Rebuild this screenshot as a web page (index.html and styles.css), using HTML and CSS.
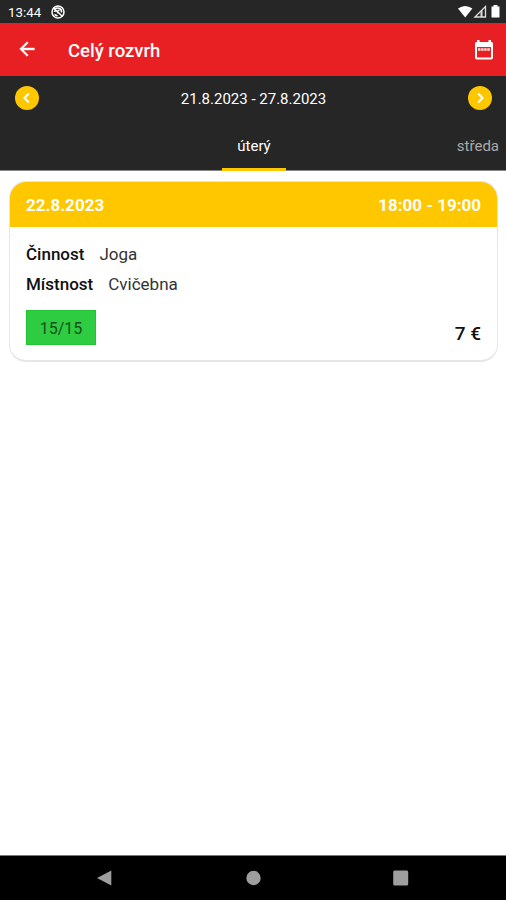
FILE: index.html
```html
<!DOCTYPE html>
<html lang="cs">
<head>
    <meta charset="UTF-8">
    <meta name="viewport" content="width=device-width, initial-scale=1.0">
    <title>Celý rozvrh</title>
    <link rel="stylesheet" href="styles.css">
</head>
<body>
    <div class="status-bar">
        <div class="status-left">
            <span>13:44</span>
            <svg width="14" height="14" viewBox="0 0 14 14" fill="none" stroke="#fff">
                <circle cx="7" cy="7" r="6" stroke-width="1.5"/>
                <path d="M2.500 3l9 8.500M4 4c3-2 7-.5 6.500 3.500M3 6.500c2-1.500 4 0 4 2M3.500 9.500l3 1.500M6.500 5.500h2" stroke-width="1.500"/>
            </svg>
        </div>
        <svg width="44" height="14" viewBox="0 0 44 14">
            <path d="M0 3.500Q7.200-1.500 14.400 3.500L7.200 12.500Z" fill="#fff"/>
            <path d="M17 12L27.500 1.500V12Z" fill="none" stroke="#ddd" stroke-width="1.300"/>
            <path d="M22.500 12V7L24.500 5V12Z" fill="#ddd"/>
            <path d="M35.500 0h4v1.500h2V12.500h-8V1.500h2Z" fill="#fff"/>
        </svg>
    </div>

    <header class="app-bar">
        <svg class="back-icon" width="24" height="24" viewBox="0 0 24 24">
            <path d="M20 11H7.830l5.590-5.590L12 4l-8 8 8 8 1.410-1.410L7.830 13H20v-2z"/>
        </svg>
        <h1>Celý rozvrh</h1>
        <svg width="22" height="24" viewBox="0 0 22 24">
            <path d="M4 2h2.500v2h9V2H18v2h.5Q20 4 20 5.500v14q0 2-2 2H4q-2 0-2-2v-14Q2 4 3.500 4H4ZM4 9v10.500h14V9Z" fill="#fff" fill-rule="evenodd"/>
            <path d="M5 11.500h12" stroke="#fff" stroke-width="2.500" stroke-dasharray="2.500 .6" opacity=".85"/>
        </svg>
    </header>

    <div class="week-bar">
        <button class="week-btn">
            <svg width="12" height="12" viewBox="0 0 12 12"><path d="M7.800 1.500L3.500 6l4.300 4.500"/></svg>
        </button>
        <span class="week-range">21.8.2023 - 27.8.2023</span>
        <button class="week-btn">
            <svg width="12" height="12" viewBox="0 0 12 12"><path d="M4.200 1.500L8.500 6l-4.300 4.500"/></svg>
        </button>
    </div>

    <nav class="tabs">
        <a class="tab active">úterý</a>
        <a class="tab next">středa</a>
    </nav>

    <main>
        <div class="card">
            <div class="card-header">
                <span>22.8.2023</span>
                <span>18:00 - 19:00</span>
            </div>
            <div class="card-body">
                <div class="row"><b>Činnost</b><span>Joga</span></div>
                <div class="row"><b>Místnost</b><span>Cvičebna</span></div>
                <div class="card-footer">
                    <span class="capacity">15/15</span>
                    <b class="price">7 €</b>
                </div>
            </div>
        </div>
    </main>

    <div class="nav-bar">
        <svg width="16" height="16" viewBox="0 0 16 16"><path d="M0 8L14.300 .5v15Z"/></svg>
        <svg width="16" height="16" viewBox="0 0 16 16"><circle cx="8.500" cy="8" r="7.200"/></svg>
        <svg width="16" height="16" viewBox="0 0 16 16"><rect x=".2" y=".5" width="15" height="15" rx="1.500"/></svg>
    </div>
</body>
</html>
```
FILE: styles.css
```css
:root {
    --red: #e92023;
    --yellow: #ffc700;
    --dark: #262626;
}

* {
    box-sizing: border-box;
}

body {
    margin: 0;
    height: 900px;
    display: flex;
    flex-direction: column;
    overflow: hidden;
    font-family: Roboto, "Liberation Sans", sans-serif;
    background: #fff;
    color: #111;
}

svg {
    display: block;
    flex-shrink: 0;
}

.status-bar {
    height: 23px;
    padding: 1px 4px 0 8px;
    display: flex;
    align-items: center;
    justify-content: space-between;
    background: var(--dark);
    color: #fff;
    font-size: 13.3px;
}

.status-left {
    display: flex;
    align-items: center;
    gap: 10px;
}

.app-bar {
    height: 53px;
    padding: 0 11px 0 16px;
    display: flex;
    align-items: center;
    background: var(--red);
    color: #fff;
}

.back-icon {
    width: 22px;
    margin-bottom: 1px;
    fill: #fff;
    stroke: #fff;
    stroke-width: 0.5;
}

h1 {
    flex: 1;
    margin: 2px 0 0 30px;
    font-size: 18.5px;
    font-weight: 500;
}

.week-bar {
    height: 44px;
    padding: 0 14px 0 15px;
    display: flex;
    align-items: center;
    justify-content: space-between;
    background: var(--dark);
    color: #fff;
    font-size: 15px;
}

.week-range {
    padding-top: 2px;
}

.week-btn {
    width: 24px;
    height: 24px;
    padding: 0;
    display: flex;
    align-items: center;
    justify-content: center;
    border: none;
    border-radius: 50%;
    background: var(--yellow);
}

.week-btn path {
    fill: none;
    stroke: #fff;
    stroke-width: 2;
}

.tabs {
    height: 51px;
    padding-left: 2px;
    display: grid;
    grid-template-columns: 1fr 64px 1fr;
    background: var(--dark);
    border-bottom: 1px solid #888;
    color: #aaa;
    font-size: 15px;
    line-height: 52px;
}

.tab.active {
    grid-column: 2;
    height: 51px;
    border-bottom: 3px solid var(--yellow);
    color: #fff;
    text-align: center;
}

.next {
    padding-right: 7px;
    text-align: right;
}

main {
    flex: 1;
    padding: 10px 8px 0 9px;
}

.card {
    height: 181px;
    border: 1px solid #e6e6e6;
    border-bottom-width: 2px;
    border-radius: 17px;
    overflow: hidden;
}

.card-header {
    height: 45px;
    padding: 0 16px;
    display: flex;
    align-items: center;
    justify-content: space-between;
    background: var(--yellow);
    color: #fff;
    font-size: 17px;
    font-weight: 700;
}

.card-body {
    padding: 12px 16px 0;
    font-size: 17px;
}

.row {
    height: 30px;
    display: flex;
    align-items: center;
    gap: 15px;
    color: #333;
}

.row b,
.price {
    color: #111;
    font-weight: 500;
}

.card-footer {
    margin-top: 11px;
    height: 35px;
    display: flex;
    justify-content: space-between;
}

.capacity {
    width: 70px;
    border: 1px solid #23c333;
    background: #2ecc40;
    color: #14501b;
    font-size: 16px;
    line-height: 35px;
    text-align: center;
}

.price {
    align-self: flex-end;
    font-size: 19px;
}

.nav-bar {
    height: 45px;
    padding: 0 97px 1px;
    display: flex;
    align-items: center;
    justify-content: space-between;
    background: #000;
    border-top: 1px solid #777;
}

.nav-bar svg {
    fill: #9e9e9e;
}
```
